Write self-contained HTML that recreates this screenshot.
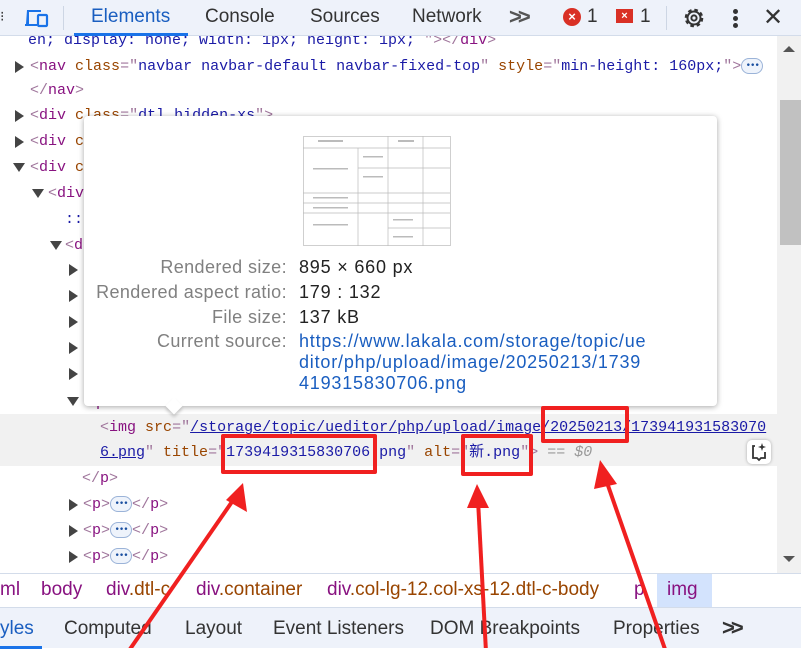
<!DOCTYPE html>
<html><head><meta charset="utf-8"><style>
*{margin:0;padding:0;box-sizing:border-box}
body{width:801px;height:648px;overflow:hidden;background:#fff;position:relative;font-family:"Liberation Sans","Noto Sans CJK SC",sans-serif}
.top{position:absolute;left:0;top:0;width:801px;height:36px;background:#eef2fa;border-bottom:1px solid #d3dcea}
.tab{position:absolute;top:6px;font-size:19px;color:#333}
.code{position:absolute;left:0;top:36px;width:777px;height:537px;overflow:hidden;font-family:"Liberation Mono","Noto Sans CJK SC",monospace;font-size:15px}
.ln{position:absolute;white-space:pre;height:26px;line-height:26px}
.t{color:#881280}.b{color:#a0769c}.a{color:#994500}.v{color:#1a1aa6}.u{color:#1a1aa6;text-decoration:underline}
.tri{position:absolute;width:0;height:0;border-top:6px solid transparent;border-bottom:6px solid transparent;border-left:9px solid #444}
.trd{position:absolute;width:0;height:0;border-left:6px solid transparent;border-right:6px solid transparent;border-top:9px solid #444}
.dots{display:inline-block;width:22px;height:16px;border:1px solid #9bb3d8;border-radius:8px;vertical-align:middle;font-size:9px;line-height:14px;text-align:center;color:#1a4fa0;font-weight:bold;background:#eef3fb;letter-spacing:-1px}
.tip{position:absolute;left:84px;top:116px;width:633px;height:290px;background:#fff;border-radius:4px;box-shadow:0 1px 6px rgba(0,0,0,.35)}
.lab{position:absolute;right:430px;font-size:18px;letter-spacing:.4px;color:#808080;white-space:nowrap}
.val{position:absolute;left:215px;font-size:18px;letter-spacing:.8px;color:#222;white-space:nowrap}
.crumb{position:absolute;left:0;top:573px;width:801px;height:34px;border-top:1px solid #d3dcea;background:#fff;font-size:19px}
.crumb span{position:absolute;top:5px;color:#881280}
.bot{position:absolute;left:0;top:607px;width:801px;height:41px;background:#eef2fa;border-top:1px solid #d3dcea;font-size:19px}
.bot span{position:absolute;top:10px;color:#333}
.rb{position:absolute;border:4px solid #f02020;border-radius:2px}
.chev{position:absolute;font-size:22px;color:#555;font-weight:bold;letter-spacing:-4px}
</style></head><body>
<div class="top">
 <div style="position:absolute;left:0;top:8px;width:4px;height:18px;color:#333;font-size:14px">⁝</div>
 <svg style="position:absolute;left:24px;top:7px" width="26" height="22" viewBox="0 0 26 22"><path d="M3 3h14v2H5v12H2zM1 17h12v2H1z" fill="#1a73e8"/><rect x="14" y="8" width="9" height="11" rx="1" fill="none" stroke="#1a73e8" stroke-width="2.2"/></svg>
 <div style="position:absolute;left:63px;top:6px;width:1px;height:24px;background:#cdd6e4"></div>
 <div class="tab" style="left:91px;color:#1a5ec0">Elements</div>
 <div style="position:absolute;left:74px;top:33px;width:114px;height:3px;background:#1a73e8"></div>
 <div class="tab" style="left:205px">Console</div>
 <div class="tab" style="left:310px">Sources</div>
 <div class="tab" style="left:412px">Network</div>
 <div class="chev" style="left:509px;top:4px">&gt;&gt;</div>
 <div style="position:absolute;left:563px;top:8px;width:18px;height:18px;border-radius:50%;background:#d93025;color:#fff;font-size:13px;text-align:center;line-height:18px;font-weight:bold">×</div>
 <div class="tab" style="left:587px">1</div>
 <div style="position:absolute;left:616px;top:9px;width:17px;height:14px;background:#d93025;color:#fff;font-size:11px;text-align:center;line-height:14px;font-weight:bold">×</div>
 <div class="tab" style="left:640px">1</div>
 <div style="position:absolute;left:666px;top:6px;width:1px;height:24px;background:#cdd6e4"></div>
 <svg style="position:absolute;left:682px;top:6px" width="24" height="24" viewBox="0 0 24 24"><circle cx="12" cy="12" r="8" fill="none" stroke="#333" stroke-width="2.6" stroke-dasharray="3.5 2.8"/><circle cx="12" cy="12" r="6.5" fill="none" stroke="#333" stroke-width="2"/><circle cx="12" cy="12" r="2.6" fill="none" stroke="#333" stroke-width="2"/></svg>
 <div style="position:absolute;left:733px;top:9px;width:5px;height:5px;border-radius:50%;background:#333;box-shadow:0 7px 0 #333,0 14px 0 #333"></div>
 <div class="tab" style="left:763px;top:3px;font-size:24px">✕</div>
</div>
<div class="code">
 <div class="ln" style="left:28px;top:-8px"><span class="v">en; display: none; width: 1px; height: 1px; </span><span class="b">"&gt;&lt;/</span><span class="t">div</span><span class="b">&gt;</span></div>
 <div class="tri" style="left:15px;top:25px"></div>
 <div class="ln" style="left:30px;top:18px"><span class="b">&lt;</span><span class="t">nav</span> <span class="a">class</span><span class="b">="</span><span class="v">navbar navbar-default navbar-fixed-top</span><span class="b">"</span> <span class="a">style</span><span class="b">="</span><span class="v">min-height: 160px;</span><span class="b">"&gt;</span><span class="dots">•••</span></div>
 <div class="ln" style="left:30px;top:42px"><span class="b">&lt;/</span><span class="t">nav</span><span class="b">&gt;</span></div>
 <div class="tri" style="left:15px;top:74px"></div>
 <div class="ln" style="left:30px;top:67px"><span class="b">&lt;</span><span class="t">div</span> <span class="a">class</span><span class="b">="</span><span class="v">dtl hidden-xs</span><span class="b">"&gt;</span></div>
 <div class="tri" style="left:15px;top:100px"></div>
 <div class="ln" style="left:30px;top:93px"><span class="b">&lt;</span><span class="t">div</span> <span class="a">c</span></div>
 <div class="trd" style="left:13px;top:127px"></div>
 <div class="ln" style="left:30px;top:119px"><span class="b">&lt;</span><span class="t">div</span> <span class="a">c</span></div>
 <div class="trd" style="left:32px;top:153px"></div>
 <div class="ln" style="left:48px;top:145px"><span class="b">&lt;</span><span class="t">div</span></div>
 <div class="ln" style="left:65px;top:171px"><span class="v">::b</span></div>
 <div class="trd" style="left:50px;top:205px"></div>
 <div class="ln" style="left:65px;top:197px"><span class="b">&lt;</span><span class="t">d</span></div>
 <div class="tri" style="left:69px;top:228px"></div>
 <div class="tri" style="left:69px;top:254px"></div>
 <div class="tri" style="left:69px;top:280px"></div>
 <div class="tri" style="left:69px;top:306px"></div>
 <div class="tri" style="left:69px;top:332px"></div>
 <div class="trd" style="left:67px;top:361px"></div>
 <div class="ln" style="left:87px;top:354px"><span class="b">&lt;</span><span class="t">p</span><span class="b">&gt;</span></div>
 <div style="position:absolute;left:0;top:378px;width:777px;height:52px;background:#f1f1f1"></div>
 <div class="ln" style="left:100px;top:379px"><span class="b">&lt;</span><span class="t">img</span> <span class="a">src</span><span class="b">="</span><span class="u">/storage/topic/ueditor/php/upload/image/20250213/173941931583070</span></div>
 <div class="ln" style="left:100px;top:404px"><span class="u">6.png</span><span class="b">"</span> <span class="a">title</span><span class="b">="</span><span class="v">1739419315830706.png</span><span class="b">"</span> <span class="a">alt</span><span class="b">="</span><span class="v">新.png</span><span class="b">"&gt;</span> <span style="color:#999;font-style:italic">== $0</span></div>
 <div style="position:absolute;left:747px;top:404px;width:24px;height:24px;background:#fff;border-radius:5px;box-shadow:0 0 3px rgba(0,0,0,.3)"><svg width="24" height="24" viewBox="0 0 24 24"><path d="M8 6H6v12h4l2 2 2-2h4v-6" fill="none" stroke="#333" stroke-width="1.8"/><path d="M15 3l1 3 3 1-3 1-1 3-1-3-3-1 3-1z" fill="#333"/></svg></div>
 <div class="ln" style="left:82px;top:430px"><span class="b">&lt;/</span><span class="t">p</span><span class="b">&gt;</span></div>
 <div class="tri" style="left:69px;top:463px"></div>
 <div class="ln" style="left:83px;top:456px"><span class="b">&lt;</span><span class="t">p</span><span class="b">&gt;</span><span class="dots">•••</span><span class="b">&lt;/</span><span class="t">p</span><span class="b">&gt;</span></div>
 <div class="tri" style="left:69px;top:489px"></div>
 <div class="ln" style="left:83px;top:482px"><span class="b">&lt;</span><span class="t">p</span><span class="b">&gt;</span><span class="dots">•••</span><span class="b">&lt;/</span><span class="t">p</span><span class="b">&gt;</span></div>
 <div class="tri" style="left:69px;top:515px"></div>
 <div class="ln" style="left:83px;top:508px"><span class="b">&lt;</span><span class="t">p</span><span class="b">&gt;</span><span class="dots">•••</span><span class="b">&lt;/</span><span class="t">p</span><span class="b">&gt;</span></div>
</div>
<div style="position:absolute;left:777px;top:36px;width:24px;height:537px;background:#f1f1f1"></div>
<div style="position:absolute;left:780px;top:100px;width:21px;height:145px;background:#c1c1c1"></div>
<div style="position:absolute;left:783px;top:46px;border-left:6px solid transparent;border-right:6px solid transparent;border-bottom:6px solid #555"></div>
<div style="position:absolute;left:783px;top:556px;border-left:6px solid transparent;border-right:6px solid transparent;border-top:6px solid #555"></div>

<div class="tip">
 <svg style="position:absolute;left:219px;top:20px" width="148" height="110" viewBox="0 0 148 110"><g fill="none" stroke="#bbb" stroke-width="0.7"><rect x="0.5" y="0.5" width="147" height="109"/><path d="M0 12H147M0 57H147M0 67H147M0 77H147M55 12V110M85 0V110M120 0V110M55 32H147M85 92H147"/></g><g fill="#bbb"><rect x="15" y="4" width="25" height="2"/><rect x="95" y="4" width="16" height="2"/><rect x="10" y="32" width="35" height="1.5"/><rect x="60" y="20" width="20" height="1.5"/><rect x="60" y="40" width="20" height="1.5"/><rect x="10" y="61" width="35" height="1.5"/><rect x="10" y="71" width="35" height="1.5"/><rect x="10" y="88" width="35" height="1.5"/><rect x="90" y="83" width="20" height="1.5"/><rect x="90" y="100" width="20" height="1.5"/></g></svg>
 <div class="lab" style="top:141px">Rendered size:</div><div class="val" style="top:141px">895 × 660 px</div>
 <div class="lab" style="top:166px">Rendered aspect ratio:</div><div class="val" style="top:166px">179 : 132</div>
 <div class="lab" style="top:191px">File size:</div><div class="val" style="top:191px">137 kB</div>
 <div class="lab" style="top:215px">Current source:</div>
 <div class="val" style="top:215px;color:#1a5ec0;line-height:21px">https://www.lakala.com/storage/topic/ue<br>ditor/php/upload/image/20250213/1739<br>419315830706.png</div>
 <div style="position:absolute;left:84px;top:284px;width:12px;height:12px;background:#fff;transform:rotate(45deg);box-shadow:2px 2px 3px rgba(0,0,0,.2)"></div>
</div>

<div class="crumb">
 <span style="left:0">ml</span><span style="left:41px">body</span><span style="left:106px">div<span style="position:static;color:#994500">.dtl-c</span></span><span style="left:196px">div<span style="position:static;color:#994500">.container</span></span><span style="left:327px">div<span style="position:static;color:#994500">.col-lg-12.col-xs-12.dtl-c-body</span></span><span style="left:634px">p</span>
 <div style="position:absolute;left:657px;top:0;width:55px;height:33px;background:#d3e3fd"></div><span style="left:667px">img</span>
</div>
<div class="bot">
 <span style="left:0;color:#1a5ec0">yles</span><div style="position:absolute;left:0;top:38px;width:42px;height:3px;background:#1a73e8"></div>
 <span style="left:64px">Computed</span><span style="left:185px">Layout</span><span style="left:273px">Event Listeners</span><span style="left:430px">DOM Breakpoints</span><span style="left:613px">Properties</span><span class="chev" style="left:722px;top:7px">&gt;&gt;</span>
</div>

<div class="rb" style="left:541px;top:406px;width:88px;height:37px"></div>
<div class="rb" style="left:221px;top:434px;width:156px;height:40px"></div>
<div class="rb" style="left:461px;top:434px;width:72px;height:42px"></div>
<svg style="position:absolute;left:0;top:0" width="801" height="648"><g stroke="#f02020" stroke-width="4" fill="#f02020"><line x1="128" y1="652" x2="236" y2="496"/><line x1="486" y1="652" x2="478" y2="500"/><line x1="666" y1="652" x2="604" y2="474"/></g><g fill="#f02020"><polygon points="243,483 247,512 226,500"/><polygon points="477,484 489,508 467,508"/><polygon points="600,460 617,484 594,489"/></g></svg>
</body></html>
